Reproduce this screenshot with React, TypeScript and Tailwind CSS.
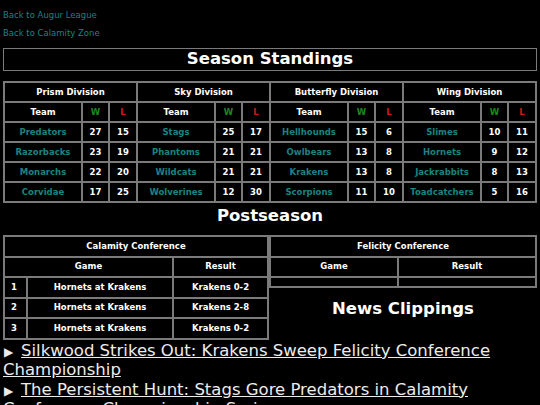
const divisions = [
  {
    name: 'Prism Division',
    teams: [
      ['Predators', 27, 15],
      ['Razorbacks', 23, 19],
      ['Monarchs', 22, 20],
      ['Corvidae', 17, 25],
    ],
  },
  {
    name: 'Sky Division',
    teams: [
      ['Stags', 25, 17],
      ['Phantoms', 21, 21],
      ['Wildcats', 21, 21],
      ['Wolverines', 12, 30],
    ],
  },
  {
    name: 'Butterfly Division',
    teams: [
      ['Hellhounds', 15, 6],
      ['Owlbears', 13, 8],
      ['Krakens', 13, 8],
      ['Scorpions', 11, 10],
    ],
  },
  {
    name: 'Wing Division',
    teams: [
      ['Slimes', 10, 11],
      ['Hornets', 9, 12],
      ['Jackrabbits', 8, 13],
      ['Toadcatchers', 5, 16],
    ],
  },
];

const calamityGames = [
  ['1', 'Hornets at Krakens', 'Krakens 0-2'],
  ['2', 'Hornets at Krakens', 'Krakens 2-8'],
  ['3', 'Hornets at Krakens', 'Krakens 0-2'],
];

const news = [
  'Silkwood Strikes Out: Krakens Sweep Felicity Conference Championship',
  'The Persistent Hunt: Stags Gore Predators in Calamity Conference Championship Series',
];

const cell = 'border border-[#7a7a7a] flex items-center justify-center h-[20px]';
const pcell = 'border border-[#7a7a7a] flex items-center justify-center h-[20.5px]';

function Division({ name, teams }: { name: string; teams: (string | number)[][] }) {
  return (
    <div className="w-[133px] grid grid-cols-[78px_27px_28px]">
      <div className={`${cell} col-span-3`}>{name}</div>
      <div className={cell}>Team</div>
      <div className={`${cell} text-[#1d8a1d]`}>W</div>
      <div className={`${cell} text-[#d01818]`}>L</div>
      {teams.map(([team, w, l]) => (
        <div key={team as string} className="contents">
          <div className={`${cell} text-[#1a8383]`}>{team}</div>
          <div className={cell}>{w}</div>
          <div className={cell}>{l}</div>
        </div>
      ))}
    </div>
  );
}

export default function App() {
  return (
    <div
      className="min-h-screen bg-black text-white px-[3px] pt-[10px]"
      style={{ fontFamily: '"DejaVu Sans", Verdana, sans-serif' }}
    >
      <div className="text-[8.5px] text-[#1a8383] leading-[10px] flex flex-col gap-[8px]">
        <a className="block">Back to Augur League</a>
        <a className="block">Back to Calamity Zone</a>
      </div>

      <div className="mt-[10px] border border-[#7a7a7a] h-[23px] flex items-center justify-center text-[16.5px] font-bold">
        Season Standings
      </div>

      <div className="mt-[10px] border border-[#7a7a7a] flex w-[534px] text-[8.5px] font-bold">
        {divisions.map((d) => (
          <Division key={d.name} name={d.name} teams={d.teams} />
        ))}
      </div>

      <div className="text-center text-[16.5px] font-bold h-[32px] leading-[22px] pt-[2px]">Postseason</div>

      <div className="flex text-[8.5px] font-bold">
        <div className="w-[266px] border border-[#7a7a7a] grid grid-cols-[23px_146px_95px] self-start">
          <div className={`${pcell} col-span-3`}>Calamity Conference</div>
          <div className={`${pcell} col-span-2`}>Game</div>
          <div className={pcell}>Result</div>
          {calamityGames.map(([n, game, result]) => (
            <div key={n} className="contents">
              <div className={`${pcell} justify-start pl-[6px]`}>{n}</div>
              <div className={pcell}>{game}</div>
              <div className={pcell}>{result}</div>
            </div>
          ))}
        </div>
        <div className="w-[268px] flex flex-col">
          <div className="border border-[#7a7a7a] grid grid-cols-[128px_138px]">
            <div className={`${pcell} col-span-2`}>Felicity Conference</div>
            <div className={pcell}>Game</div>
            <div className={pcell}>Result</div>
            <div className="border border-[#7a7a7a] h-[10px]" />
            <div className="border border-[#7a7a7a] h-[10px]" />
          </div>
          <div className="text-center text-[16.5px] font-bold mt-[9px]">News Clippings</div>
        </div>
      </div>

      <div className="pt-[1px] text-[16.5px] leading-[19.5px] text-[#ececec]">
        {news.map((n) => (
          <div key={n}>
            <span className="inline-block w-[18px] pl-[1px] text-[12px] leading-[12px]">▶</span>
            <a className="underline">{n}</a>
          </div>
        ))}
      </div>
    </div>
  );
}
